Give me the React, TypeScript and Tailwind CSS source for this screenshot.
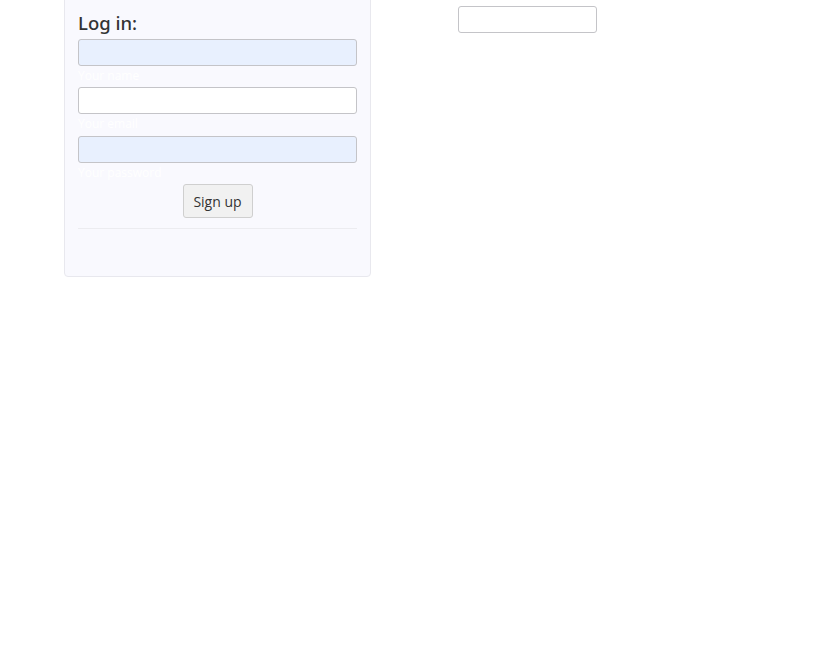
import React from "react";

const font = { fontFamily: '"Open Sans", "Noto Sans", sans-serif' };

function Field({ filled, label, gap }: { filled: boolean; label: string; gap: string }) {
  return (
    <div className="flex flex-col">
      <div
        className={
          "h-[27px] w-full rounded-[3px] border border-[#c4c4c8] " +
          (filled ? "bg-[#e8f0fe]" : "bg-white")
        }
      />
      <div className={gap + " pt-[2px] text-[12px] leading-[16px] text-white"}>{label}</div>
    </div>
  );
}

export default function App() {
  return (
    <div
      className="flex h-[658px] w-[830px] items-start overflow-hidden bg-white text-[#333]"
      style={font}
    >
      <div className="ml-[64px] -mt-[10px] w-[307px] rounded-b-[4px] border border-[#e8e8ee] bg-[#f9f9fe] px-[13px] pb-[47px] pt-[20px]">
        <h2 className="mb-[4px] font-['Noto_Sans',sans-serif] text-[18.5px] font-medium leading-[24px] text-[#333]">
          Log in:
        </h2>
        <Field filled label="Your name" gap="h-[21px]" />
        <Field filled={false} label="Your email" gap="h-[22px]" />
        <Field filled label="Your password" gap="h-[21px]" />
        <div className="flex justify-center">
          <button className="h-[34px] w-[70px] rounded-[3px] border border-[#cfcfcf] bg-[#f1f1f1] text-[14px] text-[#333]">
            Sign up
          </button>
        </div>
        <div className="mt-[10px] h-px bg-[#ececf0]" />
      </div>
      <div className="ml-[87px] mt-[6px] h-[27px] w-[139px] rounded-[3px] border border-[#c4c4c8] bg-white" />
    </div>
  );
}
